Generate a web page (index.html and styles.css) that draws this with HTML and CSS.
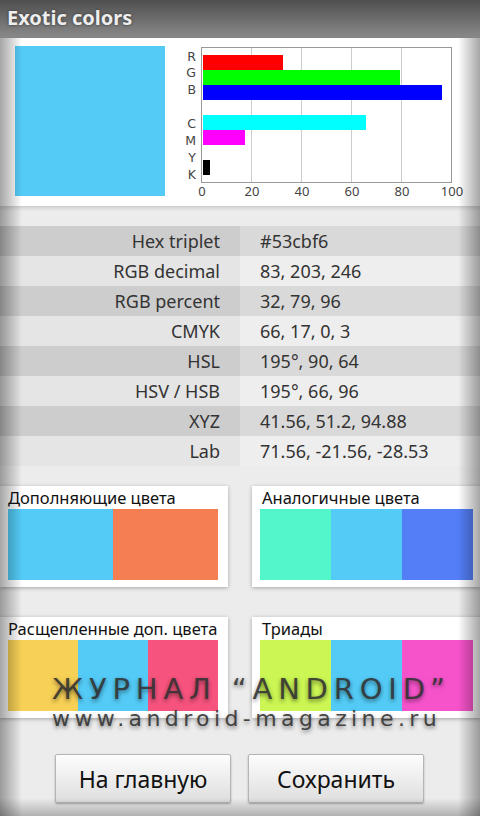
FILE: index.html
```html
<!DOCTYPE html>
<html lang="ru">
  <head>
    <meta charset="UTF-8" />
    <meta name="viewport" content="width=device-width, initial-scale=1.0" />
    <title>Exotic colors</title>
    <link rel="stylesheet" href="styles.css">
  </head>
  <body>
    <div class="titlebar">Exotic colors</div>

    <div class="screen">
      <div class="top-panel">
        <div class="swatch"></div>
        <svg class="chart" width="290" height="150" viewBox="0 0 290 150">
          <rect x="21.5" y="1.5" width="250" height="135" fill="#fff" stroke="#999" />
          <line x1="71.5" y1="2" x2="71.5" y2="136" stroke="#ccc" />
          <line x1="121.5" y1="2" x2="121.5" y2="136" stroke="#ccc" />
          <line x1="171.5" y1="2" x2="171.5" y2="136" stroke="#ccc" />
          <line x1="221.5" y1="2" x2="221.5" y2="136" stroke="#ccc" />
          <rect x="23" y="9" width="80" height="15" fill="#ff0000" />
          <rect x="23" y="24" width="197" height="15" fill="#00ff00" />
          <rect x="23" y="39" width="239" height="15" fill="#0000ff" />
          <rect x="23" y="69" width="163" height="15" fill="#00ffff" />
          <rect x="23" y="84" width="42" height="15" fill="#ff00ff" />
          <rect x="23" y="114" width="7" height="15" fill="#000" />
          <g class="bar-label" text-anchor="end">
            <text x="16" y="15">R</text>
            <text x="16" y="31">G</text>
            <text x="16" y="48">B</text>
            <text x="16" y="82">C</text>
            <text x="16" y="99">M</text>
            <text x="16" y="116">Y</text>
            <text x="16" y="133">K</text>
          </g>
          <g class="axis-label" text-anchor="middle">
            <text x="22" y="150">0</text>
            <text x="72" y="150">20</text>
            <text x="122" y="150">40</text>
            <text x="172" y="150">60</text>
            <text x="222" y="150">80</text>
            <text x="272" y="150">100</text>
          </g>
        </svg>
      </div>

      <table class="info">
        <tr><th>Hex triplet</th><td>#53cbf6</td></tr>
        <tr><th>RGB decimal</th><td>83, 203, 246</td></tr>
        <tr><th>RGB percent</th><td>32, 79, 96</td></tr>
        <tr><th>CMYK</th><td>66, 17, 0, 3</td></tr>
        <tr><th>HSL</th><td>195°, 90, 64</td></tr>
        <tr><th>HSV / HSB</th><td>195°, 66, 96</td></tr>
        <tr><th>XYZ</th><td>41.56, 51.2, 94.88</td></tr>
        <tr><th>Lab</th><td>71.56, -21.56, -28.53</td></tr>
      </table>

      <div class="schemes">
        <div class="card">
          <div class="card-title">Дополняющие цвета</div>
          <div class="strip">
            <span class="c-main"></span>
            <span class="c-orange"></span>
          </div>
        </div>
        <div class="card card-right">
          <div class="card-title">Аналогичные цвета</div>
          <div class="strip">
            <span class="c-mint"></span>
            <span class="c-main"></span>
            <span class="c-blue"></span>
          </div>
        </div>
        <div class="card">
          <div class="card-title">Расщепленные доп. цвета</div>
          <div class="strip">
            <span class="c-yellow"></span>
            <span class="c-main"></span>
            <span class="c-rose"></span>
          </div>
        </div>
        <div class="card card-right">
          <div class="card-title">Триады</div>
          <div class="strip">
            <span class="c-lime"></span>
            <span class="c-main"></span>
            <span class="c-magenta"></span>
          </div>
        </div>
      </div>

      <div class="buttons">
        <button>На главную</button>
        <button>Сохранить</button>
      </div>

      <div class="watermark">
        <div class="wm-title">ЖУРНАЛ “ANDROID”</div>
        <div class="wm-url">www.android-magazine.ru</div>
      </div>

      <div class="vignette"></div>
    </div>
  </body>
</html>
```

FILE: styles.css
```css
body {
  margin: 0;
  width: 480px;
  height: 816px;
  overflow: hidden;
  background: #ececec;
  font-family: "Noto Sans", "Open Sans", sans-serif;
}
.titlebar {
  height: 38px;
  box-sizing: border-box;
  padding-left: 7px;
  line-height: 36px;
  font-size: 20px;
  font-weight: bold;
  color: #eeeeee;
  text-shadow: 0 0 3px #333;
  background: linear-gradient(#4f4f4f, #8a8a8a);
}
.screen {
  position: relative;
  height: 778px;
}
.top-panel {
  display: flex;
  align-items: flex-start;
  height: 168px;
  box-sizing: border-box;
  padding: 8px 0 10px 15px;
  background: #fff;
  box-shadow: 0 2px 4px rgba(0, 0, 0, 0.15);
}
.swatch {
  width: 150px;
  height: 150px;
  background: #53cbf6;
}
.chart {
  margin-left: 15px;
  overflow: visible;
}
.bar-label {
  font-family: "DejaVu Sans", sans-serif;
  font-size: 12.5px;
  fill: #444;
}
.axis-label {
  font-family: "Noto Sans", sans-serif;
  font-size: 13px;
  fill: #444;
}
.info {
  width: 100%;
  margin-top: 20px;
  border-collapse: collapse;
  font-size: 18px;
  color: #333;
}
.info th,
.info td {
  height: 30px;
  padding: 0;
  font-weight: normal;
  line-height: 30px;
}
.info th {
  width: 220px;
  padding-right: 20px;
  text-align: right;
}
.info td {
  padding-left: 20px;
  text-align: left;
}
.info tr:nth-child(odd) th {
  background: #cdcdcd;
}
.info tr:nth-child(odd) td {
  background: #d9d9d9;
}
.info tr:nth-child(even) th {
  background: #e5e5e5;
}
.info tr:nth-child(even) td {
  background: #efeeef;
}
.schemes {
  display: grid;
  grid-template-columns: 228px 228px;
  column-gap: 24px;
  row-gap: 30px;
  margin-top: 20px;
}
.card {
  background: #fff;
  padding: 0 10px 7px 8px;
  box-shadow: 0 1px 4px rgba(0, 0, 0, 0.3);
}
.card-right {
  padding-right: 7px;
}
.card-title {
  height: 23px;
  line-height: 23px;
  font-size: 16.5px;
  color: #111;
  white-space: nowrap;
}
.card-right .card-title {
  padding-left: 2px;
}
.strip {
  display: flex;
  height: 71px;
}
.strip span {
  flex: 1;
}
.c-main { background: #53cbf6; }
.c-orange { background: #f67e53; }
.c-mint { background: #53f6cb; }
.c-blue { background: #537ef6; }
.c-yellow { background: #f7d156; }
.c-rose { background: #f6537e; }
.c-lime { background: #cbf653; }
.c-magenta { background: #f653cb; }
.buttons {
  display: flex;
  justify-content: center;
  gap: 17px;
  margin-top: 36px;
  padding-right: 1px;
}
.buttons button {
  width: 176px;
  height: 49px;
  font-family: "Noto Sans", sans-serif;
  font-size: 23px;
  color: #111;
  background: linear-gradient(#fdfdfd, #dedede);
  border: 1px solid #b5b5b5;
  border-radius: 2px;
  box-shadow: 0 1px 2px rgba(0, 0, 0, 0.3);
}
.watermark {
  position: absolute;
  left: 52px;
  top: 637px;
  font-family: "DejaVu Sans", sans-serif;
  color: rgba(50, 50, 50, 0.9);
  text-shadow: 0 2px 4px rgba(0, 0, 0, 0.5);
  white-space: nowrap;
  pointer-events: none;
}
.wm-title {
  font-size: 29px;
  line-height: 29px;
  letter-spacing: 5.8px;
}
.wm-url {
  font-size: 22px;
  line-height: 30px;
  letter-spacing: 4.4px;
}
.vignette {
  position: absolute;
  inset: 0;
  pointer-events: none;
  background:
    linear-gradient(to right, rgba(0, 0, 0, 0.35), rgba(0, 0, 0, 0) 22px),
    linear-gradient(to left, rgba(0, 0, 0, 0.35), rgba(0, 0, 0, 0) 22px),
    linear-gradient(to top, rgba(0, 0, 0, 0.25), rgba(0, 0, 0, 0) 18px);
}
```
